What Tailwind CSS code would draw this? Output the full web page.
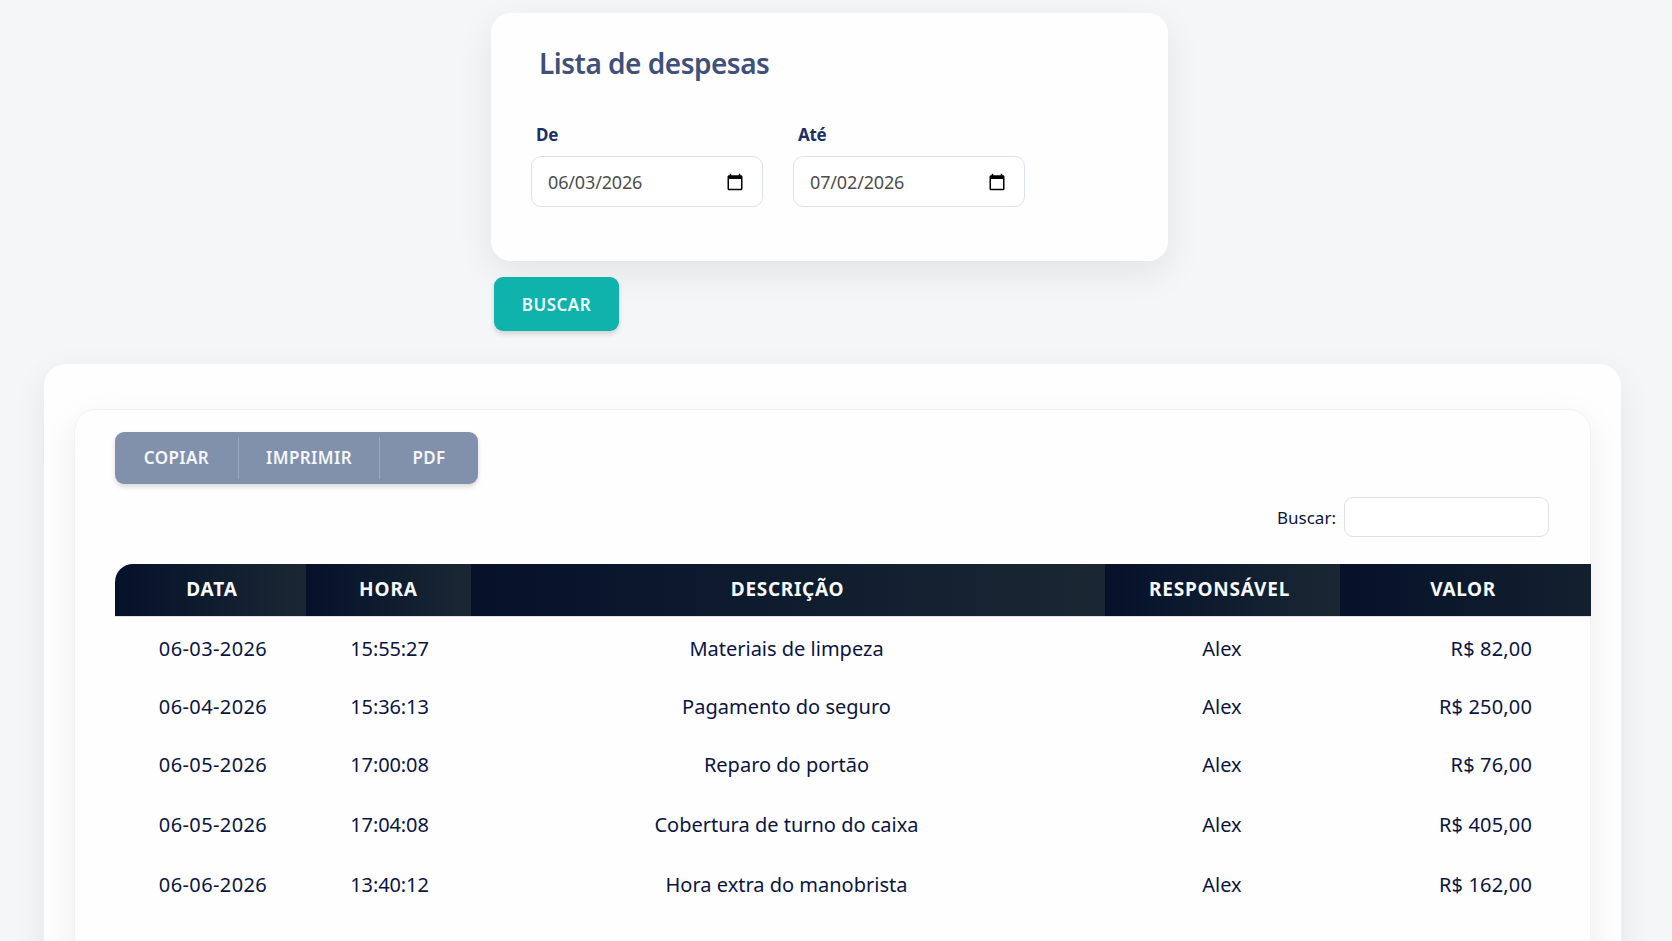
<!DOCTYPE html>
<html lang="pt-BR">
  <head>
    <meta charset="UTF-8" />
    <meta name="viewport" content="width=device-width, initial-scale=1.0" />
    <title>Lista de despesas</title>
    <script src="https://cdn.jsdelivr.net/npm/@tailwindcss/browser@4"></script>
  </head>
  <body class="h-screen overflow-hidden bg-[#f5f6f7] font-['Noto_Sans','Open_Sans',sans-serif] text-[#0b1541]">
    <main class="flex h-screen flex-col overflow-hidden pt-[13px]">
      <section class="ml-[491px] w-[677px] h-[248px] shrink-0 rounded-[20px] bg-[#fefefe] pl-10 shadow-[0_12px_36px_rgba(0,0,0,0.08)]">
        <h1 class="pt-[31px] pl-2 text-[28px] leading-[38px] font-semibold tracking-[-0.5px] text-[#3f5079]">Lista de despesas</h1>
        <form class="mt-[41px] flex gap-[30px]">
          <div class="w-[232px]">
            <label class="block pl-[5px] text-[17px] leading-6 font-bold tracking-[-0.2px] text-[#1c2f66]">De</label>
            <div class="mt-[9px] flex h-[51px] items-center justify-between rounded-[10px] border border-[#dde2e9] bg-white pl-[16px] pr-[18px]">
              <span class="pt-[2px] text-[18px] tracking-[-0.15px] text-[#4d4d4d]">06/03/2026</span>
              <svg class="h-[18px] w-[18px]" viewBox="0 0 24 24">
                <path d="M20 3h-1V1h-2v2H7V1H5v2H4c-1.100 0-2 .9-2 2v16c0 1.100.9 2 2 2h16c1.100 0 2-.9 2-2V5c0-1.100-.9-2-2-2zm0 18H4V8h16v13z" />
              </svg>
            </div>
          </div>
          <div class="w-[232px]">
            <label class="block pl-[5px] text-[17px] leading-6 font-bold tracking-[-0.3px] text-[#1c2f66]">Até</label>
            <div class="mt-[9px] flex h-[51px] items-center justify-between rounded-[10px] border border-[#dde2e9] bg-white pl-[16px] pr-[18px]">
              <span class="pt-[2px] text-[18px] tracking-[-0.15px] text-[#4d4d4d]">07/02/2026</span>
              <svg class="h-[18px] w-[18px]" viewBox="0 0 24 24">
                <path d="M20 3h-1V1h-2v2H7V1H5v2H4c-1.100 0-2 .9-2 2v16c0 1.100.9 2 2 2h16c1.100 0 2-.9 2-2V5c0-1.100-.9-2-2-2zm0 18H4V8h16v13z" />
              </svg>
            </div>
          </div>
        </form>
      </section>

      <button class="mt-4 ml-[494px] h-[54px] w-[125px] shrink-0 rounded-[9px] bg-[#10b3ac] pt-[2px] text-[17px] font-semibold tracking-[0.5px] text-[#effdfb] shadow-[0_3px_5px_rgba(0,0,0,0.15)]">BUSCAR</button>

      <section class="mt-[33px] ml-[44px] h-[700px] w-[1577px] shrink-0 rounded-[22px] bg-[#fefefe] px-[30px] pt-[45px] shadow-[0_12px_36px_rgba(0,0,0,0.07)]">
        <div class="h-[700px] w-[1517px] rounded-[22px] border border-[#f2f2f3] bg-[#fefefe] pt-[22px] pl-10 shadow-[0_12px_36px_rgba(0,0,0,0.07)]">
          <div class="flex h-[52px] w-[363px] items-center rounded-[9px] bg-[#8190ab] text-[17px] font-semibold tracking-[0.4px] text-[#f4f7fc] shadow-[0_3px_5px_rgba(0,0,0,0.14)]">
            <button class="h-[42px] w-[124px] border-r border-[#9aa7be]">COPIAR</button>
            <button class="h-[42px] w-[141px] border-r border-[#9aa7be]">IMPRIMIR</button>
            <button class="h-[42px] flex-1">PDF</button>
          </div>

          <div class="mt-[13px] flex h-10 items-center justify-end gap-2 pr-[41px]">
            <label for="search" class="pt-px text-[17px]">Buscar:</label>
            <input id="search" type="text" class="h-10 w-[205px] rounded-[9px] border border-[#dde1e6] bg-white px-3" />
          </div>

          <table class="mt-[27px] w-[1476px] table-fixed border-collapse text-center text-[20px] leading-7">
            <colgroup>
              <col class="w-[191px]" />
              <col class="w-[165px]" />
              <col class="w-[634px]" />
              <col class="w-[235px]" />
              <col class="w-[251px]" />
            </colgroup>
            <thead class="text-[19px] tracking-[0.9px] text-[#f7f9fc]">
              <tr class="h-[52px]">
                <th class="rounded-tl-[18px] bg-linear-to-r from-[#06112a] to-[#1a2733] pt-0 pb-px pl-[3px] font-bold">DATA</th>
                <th class="bg-linear-to-r from-[#06112a] to-[#1a2733] pb-px font-bold">HORA</th>
                <th class="bg-linear-to-r from-[#06112a] to-[#1a2733] pb-px pr-[1px] font-bold tracking-[0.7px]">DESCRIÇÃO</th>
                <th class="bg-linear-to-r from-[#06112a] to-[#1a2733] pb-px pr-[6px] font-bold tracking-[0.8px]">RESPONSÁVEL</th>
                <th class="bg-linear-to-r from-[#06112a] to-[#14202e] pb-px pr-[5px] font-bold tracking-[0.6px]">VALOR</th>
              </tr>
            </thead>
            <tbody>
              <tr class="h-[4px]">
                <td colspan="5" class="border-t border-[#e6dfe8] p-0"></td>
              </tr>
              <tr class="h-[58px]">
                <td class="pl-[5px] tracking-[0.4px]">06-03-2026</td>
                <td class="pl-[2px] tracking-[-0.1px]">15:55:27</td>
                <td class="pr-[3px]">Materiais de limpeza</td>
                <td class="pr-[1px]">Alex</td>
                <td class="pr-[59px] text-right tracking-[0.15px]">R$ 82,00</td>
              </tr>
              <tr class="h-[58px]">
                <td class="pl-[5px] tracking-[0.4px]">06-04-2026</td>
                <td class="pl-[2px] tracking-[-0.1px]">15:36:13</td>
                <td class="pr-[3px]">Pagamento do seguro</td>
                <td class="pr-[1px]">Alex</td>
                <td class="pr-[59px] text-right tracking-[0.15px]">R$ 250,00</td>
              </tr>
              <tr class="h-[58px]">
                <td class="pl-[5px] tracking-[0.4px]">06-05-2026</td>
                <td class="pl-[2px] tracking-[-0.1px]">17:00:08</td>
                <td class="pr-[3px]">Reparo do portão</td>
                <td class="pr-[1px]">Alex</td>
                <td class="pr-[59px] text-right tracking-[0.15px]">R$ 76,00</td>
              </tr>
              <tr class="h-[61px]">
                <td class="pl-[5px] tracking-[0.4px]">06-05-2026</td>
                <td class="pl-[2px] tracking-[-0.1px]">17:04:08</td>
                <td class="pr-[3px]">Cobertura de turno do caixa</td>
                <td class="pr-[1px]">Alex</td>
                <td class="pr-[59px] text-right tracking-[0.15px]">R$ 405,00</td>
              </tr>
              <tr class="h-[60px]">
                <td class="pl-[5px] tracking-[0.4px]">06-06-2026</td>
                <td class="pl-[2px] tracking-[-0.1px]">13:40:12</td>
                <td class="pr-[3px]">Hora extra do manobrista</td>
                <td class="pr-[1px]">Alex</td>
                <td class="pr-[59px] text-right tracking-[0.15px]">R$ 162,00</td>
              </tr>
            </tbody>
          </table>
        </div>
      </section>
    </main>
  </body>
</html>
